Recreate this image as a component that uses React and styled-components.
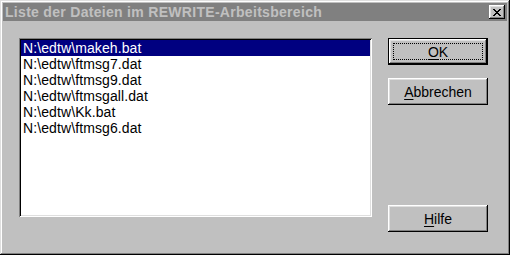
import React from 'react';
import styled, { createGlobalStyle } from 'styled-components';

const Global = createGlobalStyle`
  html, body {
    margin: 0;
    padding: 0;
    background: #c0c0c0;
  }
  * {
    box-sizing: border-box;
  }
`

const Window = styled.div`
  width: 510px;
  height: 255px;
  padding: 3px;
  background: #c0c0c0;
  font-family: "Liberation Sans", Arial, sans-serif;
  box-shadow:
    inset -1px -1px #000000,
    inset 1px 1px #dfdfdf,
    inset -2px -2px #808080,
    inset 2px 2px #ffffff;
  display: flex;
  flex-direction: column;
`

const TitleBar = styled.div`
  height: 18px;
  background: #808080;
  color: #c0c0c0;
  font-weight: bold;
  font-size: 14px;
  letter-spacing: 0.3px;
  display: flex;
  align-items: center;
  justify-content: space-between;
  padding: 0 2px 0 2px;
  white-space: nowrap;
`

const Title = styled.span`
  line-height: 18px;
`

const CloseButton = styled.div`
  width: 16px;
  height: 14px;
  background: #c0c0c0;
  display: flex;
  align-items: center;
  justify-content: center;
  box-shadow:
    inset -1px -1px #000000,
    inset 1px 1px #ffffff,
    inset -2px -2px #808080,
    inset 2px 2px #dfdfdf;
`

const Body = styled.div`
  flex: 1;
  display: flex;
  align-items: flex-start;
  padding: 17px 19px 0 16px;
`

const ListBox = styled.ul`
  width: 353px;
  height: 179px;
  margin: 0;
  padding: 2px;
  list-style: none;
  background: #ffffff;
  box-shadow:
    inset 1px 1px #808080,
    inset -1px -1px #ffffff,
    inset 2px 2px #000000,
    inset -2px -2px #dfdfdf;
`

const Item = styled.li`
  height: 16px;
  line-height: 16px;
  font-size: 14px;
  letter-spacing: 0.1px;
  padding-left: 2px;
  white-space: nowrap;
  color: ${p => (p.$selected ? '#ffffff' : '#000000')};
  background: ${p => (p.$selected ? '#000080' : 'transparent')};
`

const ButtonColumn = styled.div`
  width: 100px;
  height: 194px;
  margin-left: 16px;
  display: flex;
  flex-direction: column;
  gap: 13px;
`

const Button = styled.div`
  position: relative;
  height: 27px;
  background: #c0c0c0;
  color: #000000;
  font-size: 14px;
  display: flex;
  align-items: center;
  justify-content: center;
  margin-top: ${p => (p.$bottom ? 'auto' : '0')};
  box-shadow: ${p =>
    p.$default
      ? `inset 0 0 0 1px #000000,
         inset -2px -2px #000000,
         inset 2px 2px #ffffff,
         inset -3px -3px #808080,
         inset 3px 3px #dfdfdf`
      : `inset -1px -1px #000000,
         inset 1px 1px #ffffff,
         inset -2px -2px #808080,
         inset 2px 2px #dfdfdf`};

  u {
    text-decoration: underline;
    text-underline-offset: 2px;
  }
`

const FocusRing = styled.span`
  position: absolute;
  left: 5px;
  top: 5px;
  right: 5px;
  bottom: 5px;
  border: 1px dotted #000000;
`

const files = [
  'N:\\edtw\\makeh.bat',
  'N:\\edtw\\ftmsg7.dat',
  'N:\\edtw\\ftmsg9.dat',
  'N:\\edtw\\ftmsgall.dat',
  'N:\\edtw\\Kk.bat',
  'N:\\edtw\\ftmsg6.dat',
]

const App = () => {
  return (
    <>
      <Global />
      <Window>
        <TitleBar>
          <Title>Liste der Dateien im REWRITE-Arbeitsbereich</Title>
          <CloseButton>
            <svg width="8" height="7" viewBox="0 0 8 7" shapeRendering="crispEdges">
              <path
                d="M0 0h2v1h-2zM6 0h2v1h-2zM1 1h2v1h-2zM5 1h2v1h-2zM2 2h4v1h-4zM3 3h2v1h-2zM2 4h4v1h-4zM1 5h2v1h-2zM5 5h2v1h-2zM0 6h2v1h-2zM6 6h2v1h-2z"
                fill="#000"
              />
            </svg>
          </CloseButton>
        </TitleBar>
        <Body>
          <ListBox>
            {files.map((f, i) => (
              <Item key={f} $selected={i === 0}>{f}</Item>
            ))}
          </ListBox>
          <ButtonColumn>
            <Button $default>
              <FocusRing />
              <span><u>O</u>K</span>
            </Button>
            <Button>
              <span><u>A</u>bbrechen</span>
            </Button>
            <Button $bottom>
              <span><u>H</u>ilfe</span>
            </Button>
          </ButtonColumn>
        </Body>
      </Window>
    </>
  )
}

export default App;
